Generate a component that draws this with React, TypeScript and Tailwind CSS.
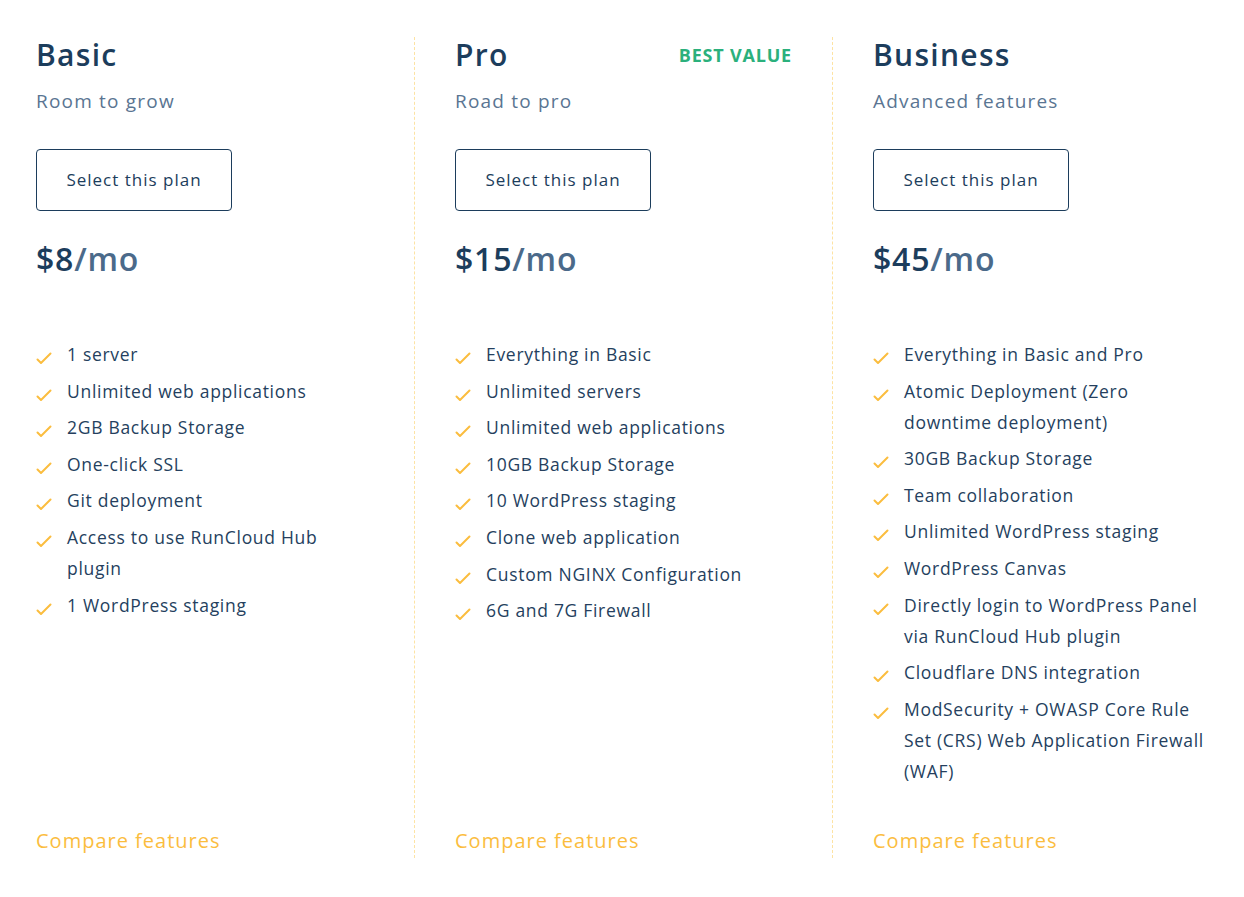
import React from "react";

type Plan = {
  name: string;
  tagline: string;
  price: string;
  features: string[];
  badge?: string;
};

const plans: Plan[] = [
  {
    name: "Basic",
    tagline: "Room to grow",
    price: "$8",
    features: [
      "1 server",
      "Unlimited web applications",
      "2GB Backup Storage",
      "One-click SSL",
      "Git deployment",
      "Access to use RunCloud Hub plugin",
      "1 WordPress staging",
    ],
  },
  {
    name: "Pro",
    tagline: "Road to pro",
    price: "$15",
    badge: "BEST VALUE",
    features: [
      "Everything in Basic",
      "Unlimited servers",
      "Unlimited web applications",
      "10GB Backup Storage",
      "10 WordPress staging",
      "Clone web application",
      "Custom NGINX Configuration",
      "6G and 7G Firewall",
    ],
  },
  {
    name: "Business",
    tagline: "Advanced features",
    price: "$45",
    features: [
      "Everything in Basic and Pro",
      "Atomic Deployment (Zero downtime deployment)",
      "30GB Backup Storage",
      "Team collaboration",
      "Unlimited WordPress staging",
      "WordPress Canvas",
      "Directly login to WordPress Panel via RunCloud Hub plugin",
      "Cloudflare DNS integration",
      "ModSecurity + OWASP Core Rule Set (CRS) Web Application Firewall (WAF)",
    ],
  },
];

function Check() {
  return (
    <svg width="16" height="13" viewBox="0 0 16 13" fill="none" className="mt-[13px] shrink-0">
      <path d="M1.5 7.5 L5 11 L14.5 1.5" stroke="#fbbd3e" strokeWidth="2" strokeLinecap="round" strokeLinejoin="round" />
    </svg>
  );
}

function Column({ plan, className }: { plan: Plan; className: string }) {
  return (
    <div className={className}>
      <div className="flex items-center justify-between pt-[1px]">
        <h2 className="text-[30px] leading-[34px] font-semibold tracking-[1.3px] text-[#1c3d5c]">{plan.name}</h2>
        {plan.badge && (
          <span className="text-[18px] font-bold tracking-[0.8px] text-[#2bb07c]">{plan.badge}</span>
        )}
      </div>
      <p className="mt-[15px] text-[19px] leading-[28px] tracking-[1.2px] text-[#5a7592]">{plan.tagline}</p>
      <div className="mt-[34px]">
        <button className="h-[62px] w-[196px] rounded-[4px] border border-[#1c3d5c] bg-white text-[17px] tracking-[1px] text-[#1c3d5c]">
          Select this plan
        </button>
      </div>
      <div className="mt-[28px] text-[32px] leading-[40px] font-semibold tracking-[0.8px]">
        <span className="text-[#1c3d5c]">{plan.price}</span>
        <span className="text-[#4b6a8a]">/mo</span>
      </div>
      <ul className="mt-[60px] flex flex-col gap-[5.6px]">
        {plan.features.map((f) => (
          <li key={f} className="flex items-start gap-[15px]">
            <Check />
            <span className="text-[17.5px] leading-[31px] tracking-[0.7px] text-[#253f5e]">{f}</span>
          </li>
        ))}
      </ul>
      <a className="mt-auto pt-[40px] text-[20px] leading-[28px] tracking-[1px] text-[#fbbd3e]" href="#">
        Compare features
      </a>
    </div>
  );
}

export default function App() {
  return (
    <div className="min-h-[897px] w-[1244px] bg-white" style={{ fontFamily: '"Open Sans", "Liberation Sans", sans-serif' }}>
      <div className="flex pt-[37px]">
        <Column
          plan={plans[0]}
          className="flex w-[415px] flex-col border-r border-dashed border-[#fde3a3] pb-[3px] pl-[36px] pr-[40px]"
        />
        <Column
          plan={plans[1]}
          className="flex w-[418px] flex-col border-r border-dashed border-[#fde3a3] pb-[3px] pl-[40px] pr-[40px]"
        />
        <Column plan={plans[2]} className="flex w-[411px] flex-col pb-[3px] pl-[40px] pr-[30px]" />
      </div>
    </div>
  );
}
